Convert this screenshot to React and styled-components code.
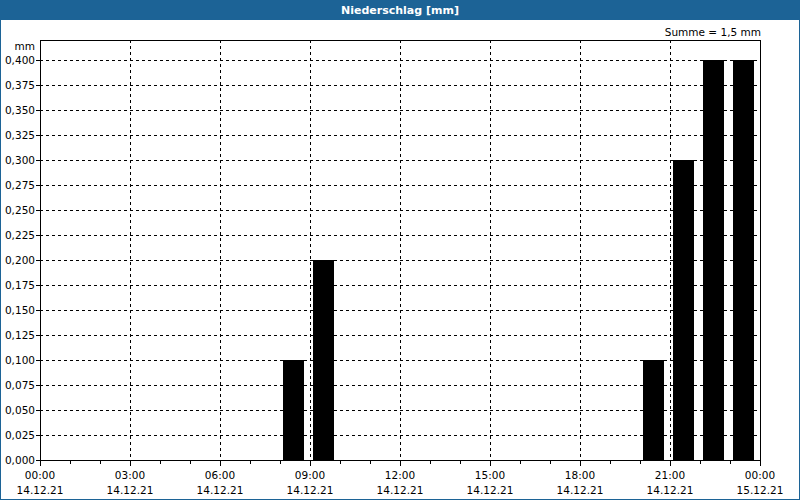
import React from "react";
import styled, { createGlobalStyle } from "styled-components";

const G = createGlobalStyle`
  body{margin:0;font-family:"DejaVu Sans",sans-serif;background:#fff;}
`;
const Frame = styled.div`
  width:800px;height:500px;box-sizing:border-box;border:1px solid #1c6396;border-top:none;
  display:flex;flex-direction:column;background:#fff;
`;
const Title = styled.div`
  height:20px;background:#1c6396;color:#fff;font-weight:bold;font-size:11px;
  display:flex;align-items:center;justify-content:center;margin:0 -1px;
`;
const T = (p) => <text fontSize="10.5" fontFamily="DejaVu Sans, sans-serif" fill="#000" {...p} />;

const bars = [[8, 0.1], [9, 0.2], [20, 0.1], [21, 0.3], [22, 0.4], [23, 0.4]];
const times = ["00:00","03:00","06:00","09:00","12:00","15:00","18:00","21:00","00:00"];

export default function App() {
  const y = (v) => 460 - v * 1000;
  return (
    <>
      <G />
      <Frame>
        <Title>Niederschlag [mm]</Title>
        <svg width="798" height="479" viewBox="1 20 798 479">
          {Array.from({ length: 16 }, (_, i) => (
            <line key={"h"+i} x1="40" x2="760" y1={60 + i * 25 + 0.5} y2={60 + i * 25 + 0.5} stroke="#000" strokeDasharray="3 3" />
          ))}
          {Array.from({ length: 7 }, (_, i) => (
            <line key={"v"+i} x1={130 + i * 90 + 0.5} x2={130 + i * 90 + 0.5} y1="40" y2="460" stroke="#000" strokeDasharray="3 3" />
          ))}
          {bars.map(([h, v]) => (
            <rect key={h} x={40 + h * 30 + 3} y={y(v)} width="21" height={v * 1000} fill="#000" />
          ))}
          <rect x="40.5" y="40.5" width="720" height="420" fill="none" stroke="#000" />
          {Array.from({ length: 25 }, (_, i) => (
            <line key={"t"+i} x1={40 + i * 30 + 0.5} x2={40 + i * 30 + 0.5} y1="460" y2={i % 3 === 0 ? 466 : 464} stroke="#000" />
          ))}
          {Array.from({ length: 17 }, (_, i) => (
            <line key={"yt"+i} x1="36" x2="40" y1={60 + i * 25 + 0.5} y2={60 + i * 25 + 0.5} stroke="#000" />
          ))}
          {Array.from({ length: 17 }, (_, i) => (
            <T key={"yl"+i} x="35" y={64 + i * 25} textAnchor="end">{(0.4 - i * 0.025).toFixed(3).replace(".", ",")}</T>
          ))}
          <T x="35" y="50" textAnchor="end">mm</T>
          <T x="761" y="36" textAnchor="end">Summe = 1,5 mm</T>
          {times.map((t, i) => (
            <g key={"x"+i}>
              <T x={40 + i * 90} y="479" textAnchor="middle">{t}</T>
              <T x={40 + i * 90} y="494" textAnchor="middle">{i === 8 ? "15.12.21" : "14.12.21"}</T>
            </g>
          ))}
        </svg>
      </Frame>
    </>
  );
}
